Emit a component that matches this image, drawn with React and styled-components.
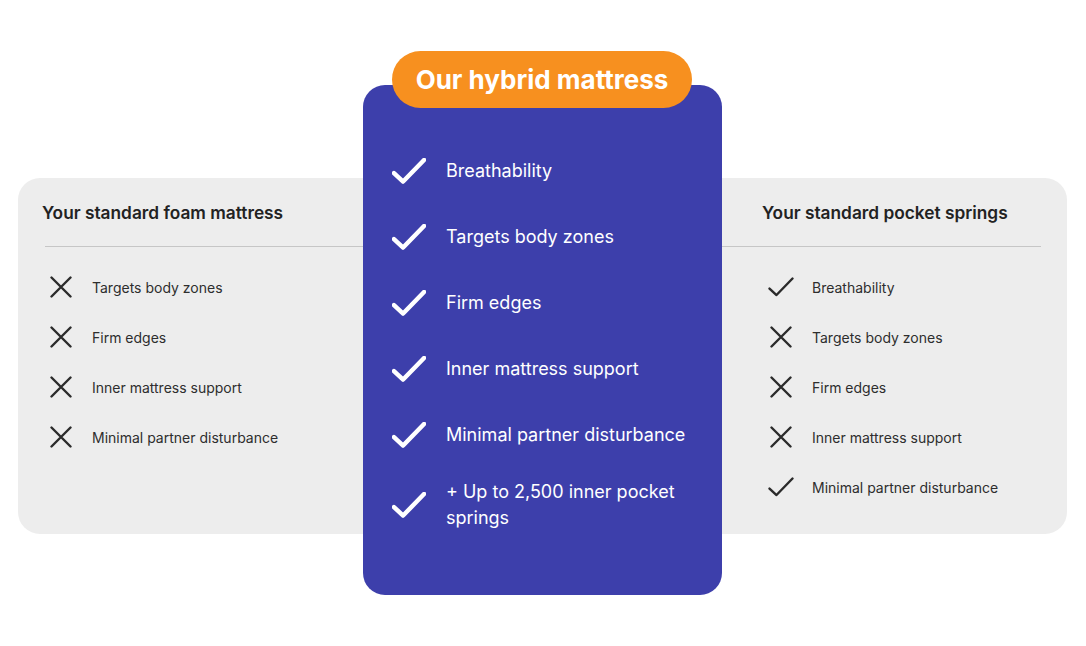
import React from "react";
import styled, { createGlobalStyle } from "styled-components";

const Global = createGlobalStyle`
  html, body { margin: 0; padding: 0; background: #ffffff; }
  body { font-family: Inter, "Noto Sans", sans-serif; -webkit-font-smoothing: antialiased; }
`;

const Page = styled.div`
  width: 1086px;
  height: 646px;
  padding: 178px 0 0 18px;
  box-sizing: border-box;
`;

const Panel = styled.div`
  display: grid;
  grid-template-columns: 345px 359px 345px;
  width: 1049px;
  height: 356px;
  background: #ededed;
  border-radius: 22px;
  align-items: start;
`;

const SideCol = styled.div`
  display: flex;
  flex-direction: column;
  padding-top: 24px;
`;

const SideTitle = styled.h3`
  margin: 0;
  padding-left: ${(p) => p.$indent}px;
  font-size: 17.3px;
  line-height: 22px;
  font-weight: 600;
  color: #222222;
`;

const Rule = styled.div`
  height: 1px;
  background: #c6c6c6;
  margin: 22px ${(p) => p.$right}px 0 ${(p) => p.$left}px;
`;

const SideList = styled.ul`
  list-style: none;
  margin: 0;
  padding: 25px 0 0 ${(p) => p.$indent}px;
  display: flex;
  flex-direction: column;
  gap: 20px;
`;

const SideItem = styled.li`
  display: flex;
  align-items: center;
  min-height: 30px;
  font-size: 14px;
  color: #2e2e2e;
`;

const IconBox = styled.span`
  width: ${(p) => p.$w}px;
  padding-left: ${(p) => p.$pad || 0}px;
  box-sizing: border-box;
  display: flex;
  align-items: center;
  flex-shrink: 0;
`;

const Card = styled.div`
  position: relative;
  margin-top: -93px;
  height: 510px;
  background: #3d3fab;
  border-radius: 22px;
  padding: 64px 0 0 29px;
  box-sizing: border-box;
`;

const Badge = styled.div`
  position: absolute;
  top: -34px;
  left: 29px;
  width: 300px;
  height: 57px;
  border-radius: 29px;
  background: #f7901f;
  color: #ffffff;
  display: flex;
  align-items: center;
  justify-content: center;
  font-size: 26px;
  font-weight: 700;
`;

const CardList = styled.ul`
  list-style: none;
  margin: 0;
  padding: 0;
  display: flex;
  flex-direction: column;
  gap: 22px;
`;

const CardItem = styled.li`
  display: flex;
  align-items: center;
  min-height: 44px;
  color: #ffffff;
  font-size: 18px;
  line-height: 26px;
`;

const CardText = styled.span`
  width: 250px;
`;

const Check = ({ size = 26, color = "#2b2b2b", width = 2.4 }) => (
  <svg width={size} height={size * 0.77} viewBox="0 0 26 20" fill="none">
    <path d="M1.5 11.5 L8.5 18 L24.5 1.5" stroke={color} strokeWidth={width} strokeLinecap="round" strokeLinejoin="round" />
  </svg>
);

const Cross = () => (
  <svg width="22" height="22" viewBox="0 0 22 22" fill="none">
    <path d="M1.5 1.5 L20.5 20.5 M20.5 1.5 L1.5 20.5" stroke="#2b2b2b" strokeWidth="2.4" strokeLinecap="round" />
  </svg>
);

const foam = ["Targets body zones", "Firm edges", "Inner mattress support", "Minimal partner disturbance"];
const springs = [
  ["Breathability", true],
  ["Targets body zones", false],
  ["Firm edges", false],
  ["Inner mattress support", false],
  ["Minimal partner disturbance", true],
];
const hybrid = [
  "Breathability",
  "Targets body zones",
  "Firm edges",
  "Inner mattress support",
  "Minimal partner disturbance",
  "+ Up to 2,500 inner pocket springs",
];

export default function App() {
  return (
    <>
      <Global />
      <Page>
        <Panel>
          <SideCol>
            <SideTitle $indent={24}>Your standard foam mattress</SideTitle>
            <Rule $left={27} $right={0} />
            <SideList $indent={32}>
              {foam.map((t) => (
                <SideItem key={t}>
                  <IconBox $w={42}>
                    <Cross />
                  </IconBox>
                  {t}
                </SideItem>
              ))}
            </SideList>
          </SideCol>

          <Card>
            <Badge>Our hybrid mattress</Badge>
            <CardList>
              {hybrid.map((t) => (
                <CardItem key={t}>
                  <IconBox $w={54}>
                    <Check size={34} color="#ffffff" width={3.4} />
                  </IconBox>
                  <CardText>{t}</CardText>
                </CardItem>
              ))}
            </CardList>
          </Card>

          <SideCol>
            <SideTitle $indent={40}>Your standard pocket springs</SideTitle>
            <Rule $left={0} $right={26} />
            <SideList $indent={46}>
              {springs.map(([t, ok]) => (
                <SideItem key={t}>
                  <IconBox $w={44} $pad={ok ? 0 : 2}>
                    {ok ? <Check /> : <Cross />}
                  </IconBox>
                  {t}
                </SideItem>
              ))}
            </SideList>
          </SideCol>
        </Panel>
      </Page>
    </>
  );
}
